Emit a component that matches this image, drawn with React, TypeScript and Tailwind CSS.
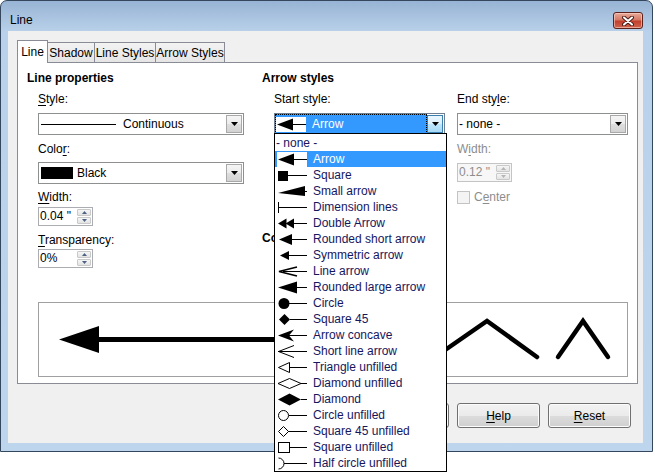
import { JSX, ReactNode } from 'react'

type Kind =
  | 'arrow'
  | 'square'
  | 'small'
  | 'dimension'
  | 'double'
  | 'roundedShort'
  | 'symmetric'
  | 'lineArrow'
  | 'roundedLarge'
  | 'circle'
  | 'square45'
  | 'concave'
  | 'shortLine'
  | 'triangleOpen'
  | 'diamondOpen'
  | 'diamond'
  | 'circleOpen'
  | 'square45Open'
  | 'squareOpen'
  | 'halfCircle'

const arrowStyles: { label: string; kind?: Kind }[] = [
  { label: '- none -' },
  { label: 'Arrow', kind: 'arrow' },
  { label: 'Square', kind: 'square' },
  { label: 'Small arrow', kind: 'small' },
  { label: 'Dimension lines', kind: 'dimension' },
  { label: 'Double Arrow', kind: 'double' },
  { label: 'Rounded short arrow', kind: 'roundedShort' },
  { label: 'Symmetric arrow', kind: 'symmetric' },
  { label: 'Line arrow', kind: 'lineArrow' },
  { label: 'Rounded large arrow', kind: 'roundedLarge' },
  { label: 'Circle', kind: 'circle' },
  { label: 'Square 45', kind: 'square45' },
  { label: 'Arrow concave', kind: 'concave' },
  { label: 'Short line arrow', kind: 'shortLine' },
  { label: 'Triangle unfilled', kind: 'triangleOpen' },
  { label: 'Diamond unfilled', kind: 'diamondOpen' },
  { label: 'Diamond', kind: 'diamond' },
  { label: 'Circle unfilled', kind: 'circleOpen' },
  { label: 'Square 45 unfilled', kind: 'square45Open' },
  { label: 'Square unfilled', kind: 'squareOpen' },
  { label: 'Half circle unfilled', kind: 'halfCircle' }
]

// little 30x15 preview bitmap used in the arrow style list
function EndIcon({ kind }: { kind: Kind }): JSX.Element {
  let from = 30
  let shape: ReactNode = null
  const open = { fill: '#fff', stroke: '#000', strokeWidth: 1 }

  switch (kind) {
    case 'arrow':
      from = 17
      shape = <polygon points="1,7.5 17,1.5 17,13.5" />
      break
    case 'square':
      from = 11
      shape = <rect x="1" y="3" width="10" height="10" />
      break
    case 'small':
      from = 28
      shape = <polygon points="1,9 28,2 28,12" />
      break
    case 'dimension':
      from = 1
      shape = <rect x="1" y="2" width="1" height="11" />
      break
    case 'double':
      from = 17
      shape = (
        <>
          <polygon points="1,7.5 9.5,2.5 9.5,12.5" />
          <polygon points="8.5,7.5 17,2.5 17,12.5" />
        </>
      )
      break
    case 'roundedShort':
      from = 15
      shape = <polygon points="2,7.5 15,2 15,13" />
      break
    case 'symmetric':
      from = 12
      shape = <polygon points="3,7.5 12,3 12,12" />
      break
    case 'lineArrow':
      from = 6
      shape = <polyline points="20,3 2,7.5 20,12" fill="none" stroke="#000" strokeWidth={1.6} />
      break
    case 'roundedLarge':
      from = 20
      shape = <polygon points="1,7.5 20,1.5 20,13.5" />
      break
    case 'circle':
      from = 12
      shape = <circle cx="7" cy="7.5" r="5.5" />
      break
    case 'square45':
      from = 13
      shape = <polygon points="2,7.5 7.5,2 13,7.5 7.5,13" />
      break
    case 'concave':
      from = 12
      shape = <polygon points="1,7.5 17,1.5 12,7.5 17,13.5" />
      break
    case 'shortLine':
      from = 1
      shape = <polyline points="17,1.5 1.5,7.5 17,13.5" fill="none" stroke="#000" strokeWidth={1} />
      break
    case 'triangleOpen':
      from = 12
      shape = <polygon points="1.5,7.5 12.5,2.5 12.5,12.5" {...open} />
      break
    case 'diamondOpen':
      from = 24
      shape = <polygon points="1,7.5 12.5,2.5 24,7.5 12.5,12.5" {...open} />
      break
    case 'diamond':
      from = 24
      shape = <polygon points="1,7.5 12.5,1.5 24,7.5 12.5,13.5" />
      break
    case 'circleOpen':
      from = 12
      shape = <circle cx="6.5" cy="7.5" r="5" {...open} />
      break
    case 'square45Open':
      from = 11
      shape = <polygon points="1.5,7.5 6.5,2.5 11.5,7.5 6.5,12.5" {...open} />
      break
    case 'squareOpen':
      from = 12
      shape = <rect x="1.5" y="2.5" width="11" height="10" {...open} />
      break
    case 'halfCircle':
      from = 7
      shape = <path d="M1.5 2 A5.5 5.5 0 0 1 1.5 13" fill="none" stroke="#000" strokeWidth={1} />
      break
  }

  return (
    <svg width="30" height="15" viewBox="0 0 30 15" className="block shrink-0 bg-white">
      <rect x={from} y="7" width={30 - from} height="1" fill="#000" />
      <g fill="#000">{shape}</g>
    </svg>
  )
}

function DropButton({ active = false }: { active?: boolean }): JSX.Element {
  return (
    <div
      className={
        active
          ? 'm-px ml-0 flex w-[16px] items-center justify-center border border-[#3c7fb1] bg-[linear-gradient(to_bottom,#eaf6fd,#d9f0fc_50%,#bee6fd_50%,#a7d9f5)]'
          : 'm-px ml-0 flex w-[16px] items-center justify-center border border-[#a9a9a9] bg-[linear-gradient(to_bottom,#f5f5f5,#ebebeb_50%,#dedede_50%,#d2d2d2)]'
      }
    >
      <svg width="7" height="4" viewBox="0 0 7 4">
        <polygon points="0,0 7,0 3.5,4" fill="#000" />
      </svg>
    </div>
  )
}

function Select({ width, children }: { width: string; children: ReactNode }): JSX.Element {
  return (
    <div className={`flex h-[22px] border border-[#8e8f8f] bg-white ${width}`}>
      <div className="flex flex-1 items-center">{children}</div>
      <DropButton />
    </div>
  )
}

function Spin({ value, disabled = false }: { value: string; disabled?: boolean }): JSX.Element {
  const arrow = disabled ? '#b4b4b4' : '#4d6185'
  return (
    <div
      className={
        disabled
          ? 'flex h-[19px] w-[55px] border border-[#c4c4c4] bg-[#f7f7f7] text-[#8d8d8d]'
          : 'flex h-[19px] w-[55px] border border-[#abadb3] bg-white'
      }
    >
      <div className="flex-1 pl-[1px] leading-[17px]">{value}</div>
      <div className="flex w-[15px] flex-col gap-px py-px pr-px">
        <div className="flex flex-1 items-center justify-center rounded-[1px] border border-[#c9c9c9] bg-[linear-gradient(to_bottom,#f6f6f6,#e3e3e3)]">
          <svg width="5" height="3" viewBox="0 0 5 3">
            <polygon points="0,3 5,3 2.5,0" fill={arrow} />
          </svg>
        </div>
        <div className="flex flex-1 items-center justify-center rounded-[1px] border border-[#c9c9c9] bg-[linear-gradient(to_bottom,#f6f6f6,#e3e3e3)]">
          <svg width="5" height="3" viewBox="0 0 5 3">
            <polygon points="0,0 5,0 2.5,3" fill={arrow} />
          </svg>
        </div>
      </div>
    </div>
  )
}

function Button({ children }: { children?: ReactNode }): JSX.Element {
  return (
    <div className="flex h-[25px] w-[83px] items-center justify-center rounded-[3px] border border-[#707070] bg-[linear-gradient(to_bottom,#f2f2f2,#ebebeb_50%,#dddddd_50%,#cfcfcf)] shadow-[inset_0_0_0_1px_#fcfcfc]">
      {children}
    </div>
  )
}

export default function App(): JSX.Element {
  return (
    <div className="relative h-[476px] w-[655px] overflow-hidden bg-white font-['Liberation_Sans',Arial,sans-serif] text-[12px] leading-[16px] text-black">
      {/* window frame */}
      <div className="flex h-[452px] w-[653px] flex-col rounded-t-[7px] border border-[#34475c] bg-[linear-gradient(to_bottom,#98b4d4,#b9d1ea_31px,#bdd5ed)]">
        <div className="flex h-[30px] shrink-0 items-start justify-between pl-[9px] pr-[9px] pt-[11px]">
          <span className="leading-[16px]">Line</span>
          <div className="flex h-[17px] w-[30px] items-center justify-center rounded-[3px] border border-[#5b231b] bg-[linear-gradient(to_bottom,#e9a99a,#d47a66_45%,#c2402d_55%,#d0654f)] shadow-[inset_0_0_0_1px_rgba(255,220,210,0.55)]">
            <svg width="12" height="10" viewBox="0 0 12 10">
              <path d="M2 1.5 L10 8.5 M10 1.5 L2 8.5" stroke="#4b1d16" strokeWidth="4" strokeLinecap="round" />
              <path d="M2 1.5 L10 8.5 M10 1.5 L2 8.5" stroke="#fff" strokeWidth="2" strokeLinecap="round" />
            </svg>
          </div>
        </div>

        {/* client area */}
        <div className="ml-[7px] flex h-[412px] w-[635px] flex-col bg-[#f0f0f0] pl-[9px] pt-[9px]">
          {/* tabs */}
          <div className="flex h-[22px] items-end">
            <div className="relative z-10 -mb-px flex h-[23px] w-[31px] items-start justify-center border border-b-0 border-[#898c95] bg-white pt-[3px]">
              Line
            </div>
            <div className="-ml-px flex h-[20px] w-[48px] items-center justify-center border border-b-0 border-[#898c95] bg-[linear-gradient(to_bottom,#f3f3f3,#e5e5e5)]">
              Shadow
            </div>
            <div className="-ml-px flex h-[20px] w-[62px] items-center justify-center border border-b-0 border-[#898c95] bg-[linear-gradient(to_bottom,#f3f3f3,#e5e5e5)]">
              Line Styles
            </div>
            <div className="-ml-px flex h-[20px] w-[70px] items-center justify-center border border-b-0 border-[#898c95] bg-[linear-gradient(to_bottom,#f3f3f3,#e5e5e5)]">
              Arrow Styles
            </div>
          </div>

          {/* tab page */}
          <div className="h-[322px] w-[621px] border border-[#898c95] bg-white pl-[9px] pt-[7px]">
            <div className="flex">
              <div className="w-[235px]">
                <div className="font-bold">Line properties</div>
                <div className="pl-[11px]">
                  <div className="mt-[5px]">
                    <span className="underline underline-offset-[2px]">S</span>tyle:
                  </div>
                  <div className="mt-[6px]">
                    <Select width="w-[206px]">
                      <div className="ml-[2px] mr-[7px] h-px w-[75px] bg-black" />
                      <span>Continuous</span>
                    </Select>
                  </div>
                  <div className="mt-[6px]">
                    Colo<span className="underline underline-offset-[2px]">r</span>:
                  </div>
                  <div className="mt-[5px]">
                    <Select width="w-[206px]">
                      <div className="ml-[2px] mr-[4px] h-[12px] w-[32px] bg-black" />
                      <span>Black</span>
                    </Select>
                  </div>
                  <div className="mt-[5px]">
                    <span className="underline underline-offset-[2px]">W</span>idth:
                  </div>
                  <div className="mt-[2px]">
                    <Spin value={'0.04 "'} />
                  </div>
                  <div className="mt-[6px]">
                    <span className="underline underline-offset-[2px]">T</span>ransparency:
                  </div>
                  <div className="mt-[1px]">
                    <Spin value="0%" />
                  </div>
                </div>
              </div>

              <div>
                <div className="font-bold">Arrow styles</div>
                <div className="flex pl-[12px]">
                  <div className="w-[183px]">
                    <div className="mt-[5px]">Start style:</div>
                    <div className="relative mt-[6px] w-[171px]">
                      <div className="flex h-[22px] w-[171px] border border-[#6f7f92] bg-white">
                        <div className="flex flex-1 items-center gap-[6px] border border-dotted border-black bg-[#3399ff] text-white">
                          <EndIcon kind="arrow" />
                          <span>Arrow</span>
                        </div>
                        <DropButton active />
                      </div>

                      {/* open list */}
                      <div className="absolute left-0 top-[20px] z-20 h-[339px] w-[173px] border border-black bg-white pt-px text-[#16165e]">
                        {arrowStyles.map((s) => (
                          <div
                            key={s.label}
                            className={
                              s.label === 'Arrow'
                                ? 'flex h-[16px] items-center gap-[6px] bg-[#3399ff] pl-[2px] text-white'
                                : 'flex h-[16px] items-center gap-[6px] pl-[2px]'
                            }
                          >
                            {s.kind ? <EndIcon kind={s.kind} /> : <span className="-ml-px">{s.label}</span>}
                            {s.kind && <span>{s.label}</span>}
                          </div>
                        ))}
                      </div>
                    </div>
                  </div>

                  <div className="w-[171px]">
                    <div className="mt-[5px]">
                      End sty<span className="underline underline-offset-[2px]">l</span>e:
                    </div>
                    <div className="mt-[6px]">
                      <Select width="w-[171px]">
                        <span className="pl-[1px]">- none -</span>
                      </Select>
                    </div>
                    <div className="mt-[6px] text-[#8d8d8d]">
                      W<span className="underline underline-offset-[2px]">i</span>dth:
                    </div>
                    <div className="mt-[6px]">
                      <Spin value={'0.12 "'} disabled />
                    </div>
                    <div className="mt-[7px] flex h-[16px] items-center gap-[4px] text-[#8d8d8d]">
                      <div className="h-[13px] w-[13px] border border-[#c3c3c3] bg-[#f4f4f4]" />
                      <span>
                        C<span className="underline underline-offset-[2px]">e</span>nter
                      </span>
                    </div>
                  </div>
                </div>
                {/* heading runs on under the open list; only its start shows */}
                <div className="mt-[25px] font-bold">Co</div>
              </div>
            </div>

            {/* preview */}
            <div className="ml-[11px] mt-[34px] h-[75px] w-[590px] border border-[#a0a0a0] bg-white">
              <svg width="588" height="73" viewBox="0 0 588 73" className="block">
                <polygon points="20,36.5 60,23 60,50" fill="#000" />
                <rect x="59" y="34" width="300" height="5" fill="#000" />
                <polyline
                  points="396,54 448,18 498,54"
                  fill="none"
                  stroke="#000"
                  strokeWidth="4.5"
                  strokeLinecap="round"
                />
                <polyline
                  points="519,54 544,18 569,54"
                  fill="none"
                  stroke="#000"
                  strokeWidth="4.5"
                  strokeLinecap="round"
                />
              </svg>
            </div>
          </div>

          {/* dialog buttons, the first two sit under the list */}
          <div className="mt-[19px] flex justify-end gap-[8px] pr-[12px]">
            <Button />
            <Button />
            <Button>
              <span>
                <span className="underline underline-offset-[2px]">H</span>elp
              </span>
            </Button>
            <Button>
              <span>
                <span className="underline underline-offset-[2px]">R</span>eset
              </span>
            </Button>
          </div>
        </div>
      </div>
    </div>
  )
}
